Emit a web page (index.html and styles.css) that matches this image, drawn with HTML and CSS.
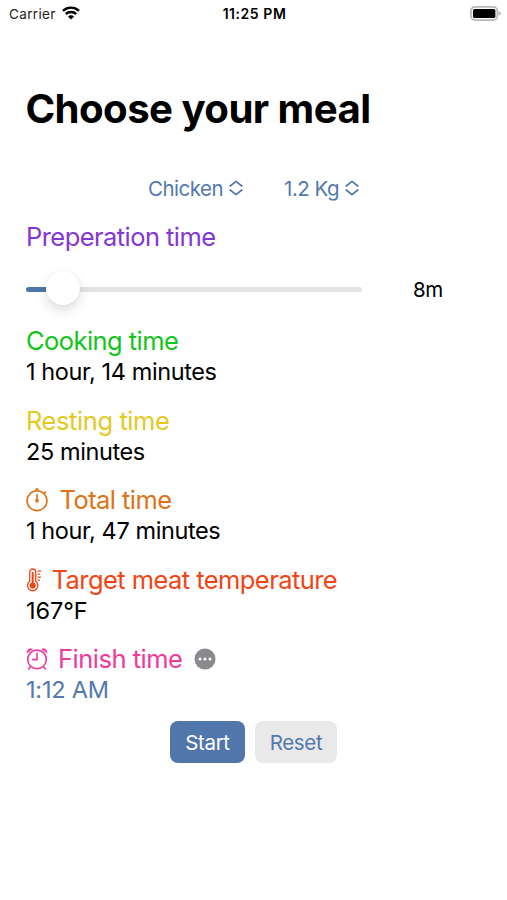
FILE: index.html
```html
<!DOCTYPE html>
<html lang="en">
<head>
<meta charset="utf-8">
<title>Choose your meal</title>
<link rel="stylesheet" href="styles.css">
</head>
<body>
<header class="status">
  <div class="carrier"><span>Carrier</span>
    <svg class="wifi" viewBox="0 0 18 14" width="18" height="14"><path d="M1 4.8a11.7 11.7 0 0 1 16 0M3.8 8a7.6 7.6 0 0 1 10.4 0" fill="none" stroke="#000" stroke-width="2.4"/><path d="M9 13.6 5.9 10.5a4.4 4.4 0 0 1 6.2 0z"/></svg>
  </div>
  <span class="clock">11:25 PM</span>
  <svg class="battery" viewBox="0 0 31 15" width="31" height="15"><rect x=".9" y=".9" width="26.4" height="13.2" rx="4" fill="#fff" stroke="#b8b8b8" stroke-width="1.7"/><rect x="3" y="3" width="22.4" height="9" rx="1.6"/><path d="M28.6 5.2q2 .6 2 2.2t-2 2.2z" fill="#aaa"/></svg>
</header>
<main>
  <h1>Choose your meal</h1>
  <div class="pickers">
    <button class="picker"><span>Chicken</span><svg viewBox="0 0 14 16" width="14" height="16"><path d="M1.2 6 7 1.3 12.8 6M1.2 10 7 14.7l5.8-4.7"/></svg></button>
    <button class="picker"><span>1.2 Kg</span><svg viewBox="0 0 14 16" width="14" height="16"><path d="M1.2 6 7 1.3 12.8 6M1.2 10 7 14.7l5.8-4.7"/></svg></button>
  </div>
  <h2 class="prep">Preperation time</h2>
  <div class="slider-row">
    <div class="slider"><div class="fill"></div><div class="thumb"></div></div>
    <span class="amount">8m</span>
  </div>
  <section>
    <h2 class="cooking">Cooking time</h2>
    <p>1 hour, 14 minutes</p>
  </section>
  <section>
    <h2 class="resting">Resting time</h2>
    <p>25 minutes</p>
  </section>
  <section>
    <h2 class="total"><svg width="22" height="24" viewBox="0 0 22 24" fill="none" stroke="currentColor" stroke-width="1.6"><circle cx="11" cy="12.7" r="9.9"/><path d="M11 2.8V1M10 1h2M18.2 5.4l1.4-1.4M11 6.6v5" stroke-linecap="round"/><circle cx="11" cy="12.7" r="1.1" fill="currentColor"/></svg><span>Total time</span></h2>
    <p>1 hour, 47 minutes</p>
  </section>
  <section>
    <h2 class="target"><svg width="15" height="24" viewBox="0 0 15 24" fill="none" stroke="currentColor" stroke-width="1.3"><path d="M3.7 13.3V4a3 3 0 0 1 6 0v9.3a5.2 5.2 0 1 1-6 0z"/><path d="M6.7 5v12" stroke-width="2" stroke-linecap="round"/><circle cx="6.7" cy="17.6" r="2.4" fill="currentColor"/><path d="M11.5 3.2H15M11.5 6.2h2.4M11.5 9.2H15M11.5 12.2h2.4"/></svg><span>Target meat temperature</span></h2>
    <p class="degrees">167°F</p>
  </section>
  <section>
    <h2 class="finish"><svg width="22" height="22" viewBox="0 0 22 22" fill="none" stroke="currentColor" stroke-width="1.6" stroke-linecap="round"><circle cx="11" cy="11.4" r="9.3"/><path d="M11 5.4v6.2H6.6M4.2 19l-1.6 1.9M17.8 19l1.6 1.9"/><path d="M1.2 4.6C.4 2.2 3.4-.2 6 1.1zM20.8 4.6C21.6 2.2 18.6-.2 16 1.1z" fill="currentColor" stroke-width=".8"/></svg><span>Finish time</span><svg class="more" width="22" height="22" viewBox="0 0 22 22"><circle cx="11" cy="11" r="10.5" fill="#8a8a8e"/><g fill="#fff"><circle cx="6" cy="11" r="1.5"/><circle cx="11" cy="11" r="1.5"/><circle cx="16" cy="11" r="1.5"/></g></svg></h2>
    <p class="link">1:12 AM</p>
  </section>
  <div class="actions"><button class="start">Start</button><button class="reset">Reset</button></div>
</main>
</body>
</html>
```
FILE: styles.css
```css
* { box-sizing: border-box; }
body { margin: 0; background: #fff; color: #000; font-family: Inter, "Liberation Sans", sans-serif; }
h1, h2, p { margin: 0; }
button { border: 0; background: none; padding: 0; font: inherit; letter-spacing: inherit; }
.status { display: grid; grid-template-columns: 1fr auto 1fr; height: 27px; padding: 0 6px 0 9px; align-items: center; font-size: 13.5px; }
.carrier { display: flex; align-items: center; gap: 6px; letter-spacing: .35px; color: #222; }
.wifi { margin-top: -2px; }
.clock { font-size: 14px; font-weight: 600; letter-spacing: .55px; margin-right: 1px; }
.battery { justify-self: end; }
main { padding: 0 26px; }
h1 { height: 139px; padding-top: 57px; font-size: 40.2px; line-height: 50px; font-weight: 700; letter-spacing: -.57px; text-indent: -.6px; }
.pickers { display: flex; justify-content: center; gap: 41px; height: 44px; align-items: center; font-size: 20.5px; letter-spacing: -.5px; color: #5279ae; }
.picker { display: flex; align-items: center; gap: 6px; color: inherit; }
.picker path { fill: none; stroke: currentColor; stroke-width: 1.7; stroke-linecap: round; stroke-linejoin: round; }
h2 { display: flex; align-items: center; height: 32px; font-size: 25.5px; line-height: 32px; font-weight: 400; letter-spacing: -.56px; }
p { height: 30px; font-size: 23.5px; line-height: 30px; letter-spacing: -.4px; }
.prep { color: #8336d8; margin-top: 11px; }
.slider-row { display: flex; height: 72px; align-items: center; font-size: 20.5px; letter-spacing: -.5px; }
.slider { width: 336px; height: 5px; border-radius: 3px; background: #e3e3e4; display: flex; align-items: center; }
.fill { width: 20px; height: 5px; background: #4d76aa; border-radius: 3px 0 0 3px; }
.thumb { width: 34px; height: 34px; margin-top: -2px; border-radius: 50%; background: #fff; box-shadow: 0 5px 12px rgba(0,0,0,.14), 0 0 1px rgba(0,0,0,.1); }
.amount { margin-left: 51px; }
section { height: 79.5px; }
.cooking { color: #13c51a; }
.resting { color: #e4c91f; letter-spacing: -.42px; }
.total { color: #dd7316; gap: 11.5px; }
.target { color: #f24415; gap: 10.5px; }
.finish { color: #f0399a; gap: 10px; letter-spacing: -.5px; }
.more { margin-left: 1.5px; }
.degrees { letter-spacing: -.1px; }
.link { color: #5279ae; letter-spacing: -.22px; }
.actions { display: flex; justify-content: center; gap: 10px; margin-top: -2px; font-size: 20.5px; letter-spacing: -.35px; }
.actions button { height: 42px; padding-top: 1px; border-radius: 8px; }
.start { width: 75px; background: #5076ac; color: #fff; }
.reset { width: 82px; background: #e9e9ea; color: #5279ae; }
```
